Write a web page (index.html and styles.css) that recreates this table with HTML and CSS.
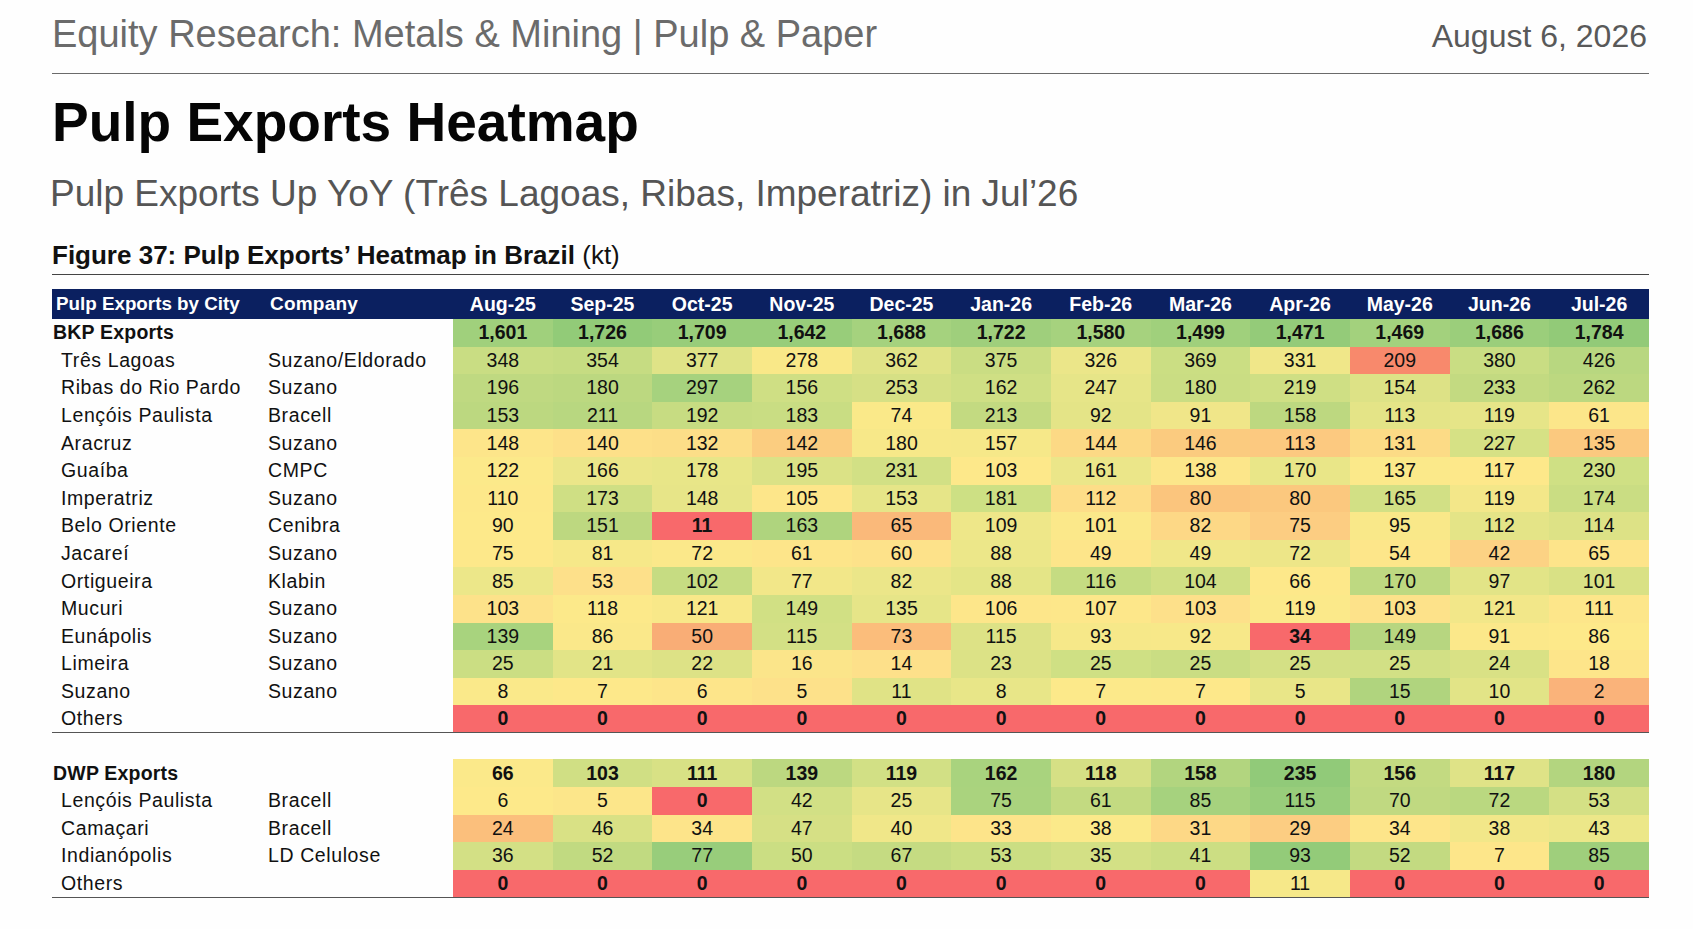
FILE: index.html
```html
<!DOCTYPE html>
<html lang="pt">
<head>
<meta charset="utf-8">
<title>Pulp Exports Heatmap</title>
<link rel="stylesheet" href="styles.css">
</head>
<body>
<div class="page">
  <header class="topbar">
    <div class="topbar-title">Equity Research: Metals &amp; Mining | Pulp &amp; Paper</div>
    <div class="topbar-date">August 6, 2026</div>
  </header>
  <h1 class="title">Pulp Exports Heatmap</h1>
  <h2 class="subtitle">Pulp Exports Up YoY (Três Lagoas, Ribas, Imperatriz) in Jul’26</h2>
  <div class="caption"><b>Figure 37: Pulp Exports’ Heatmap in Brazil</b> (kt)</div>

  <table class="heat">
    <colgroup><col class="c-city"><col class="c-comp"><col span="12" class="c-num"></colgroup>
    <thead>
      <tr><th class="h-city">Pulp Exports by City</th><th class="h-comp">Company</th><th>Aug-25</th><th>Sep-25</th><th>Oct-25</th><th>Nov-25</th><th>Dec-25</th><th>Jan-26</th><th>Feb-26</th><th>Mar-26</th><th>Apr-26</th><th>May-26</th><th>Jun-26</th><th>Jul-26</th></tr>
    </thead>
    <tbody>
      <tr class="total"><td class="city">BKP Exports</td><td class="comp"></td><td style="background:#a0d07c">1,601</td><td style="background:#92cb78">1,726</td><td style="background:#98cd7a">1,709</td><td style="background:#98cd7a">1,642</td><td style="background:#a5d27e">1,688</td><td style="background:#9fcf7c">1,722</td><td style="background:#a6d27e">1,580</td><td style="background:#a0d07c">1,499</td><td style="background:#94cb79">1,471</td><td style="background:#a3d17d">1,469</td><td style="background:#9bce7b">1,686</td><td style="background:#92ca78">1,784</td></tr>
      <tr><td class="city">Três Lagoas</td><td class="comp">Suzano/Eldorado</td><td style="background:#c9dd83">348</td><td style="background:#c6dc82">354</td><td style="background:#dfe387">377</td><td style="background:#f9e888">278</td><td style="background:#e0e387">362</td><td style="background:#cadd83">375</td><td style="background:#ebe689">326</td><td style="background:#cbde83">369</td><td style="background:#f0e789">331</td><td style="background:#f8896c">209</td><td style="background:#c9dd83">380</td><td style="background:#b8d780">426</td></tr>
      <tr><td class="city">Ribas do Rio Pardo</td><td class="comp">Suzano</td><td style="background:#bfd981">196</td><td style="background:#bcd880">180</td><td style="background:#a6d27e">297</td><td style="background:#cfdf84">156</td><td style="background:#d6e085">253</td><td style="background:#cfdf84">162</td><td style="background:#e6e588">247</td><td style="background:#cadd83">180</td><td style="background:#cfdf84">219</td><td style="background:#dde286">154</td><td style="background:#c3da81">233</td><td style="background:#bcd880">262</td></tr>
      <tr><td class="city">Lençóis Paulista</td><td class="comp">Bracell</td><td style="background:#bcd880">153</td><td style="background:#b8d780">211</td><td style="background:#c7dc82">192</td><td style="background:#c9dd83">183</td><td style="background:#fae989">74</td><td style="background:#c3da81">213</td><td style="background:#e4e487">92</td><td style="background:#f0e689">91</td><td style="background:#bdd880">158</td><td style="background:#e4e487">113</td><td style="background:#e6e588">119</td><td style="background:#fce68a">61</td></tr>
      <tr><td class="city">Aracruz</td><td class="comp">Suzano</td><td style="background:#fde58a">148</td><td style="background:#fde089">140</td><td style="background:#fcde88">132</td><td style="background:#fbcd80">142</td><td style="background:#f7e889">180</td><td style="background:#f6e889">157</td><td style="background:#fcd985">144</td><td style="background:#fbcb7f">146</td><td style="background:#fcc980">113</td><td style="background:#fcdb86">131</td><td style="background:#d6e185">227</td><td style="background:#fbc97f">135</td></tr>
      <tr><td class="city">Guaíba</td><td class="comp">CMPC</td><td style="background:#fce98a">122</td><td style="background:#ebe689">166</td><td style="background:#e8e688">178</td><td style="background:#dbe286">195</td><td style="background:#d2e085">231</td><td style="background:#fde88a">103</td><td style="background:#ebe689">161</td><td style="background:#fce68a">138</td><td style="background:#e9e688">170</td><td style="background:#fbe98a">137</td><td style="background:#fde88a">117</td><td style="background:#cfe084">230</td></tr>
      <tr><td class="city">Imperatriz</td><td class="comp">Suzano</td><td style="background:#fde88a">110</td><td style="background:#cfdf84">173</td><td style="background:#e7e588">148</td><td style="background:#fde68a">105</td><td style="background:#e6e588">153</td><td style="background:#cde084">181</td><td style="background:#fddd88">112</td><td style="background:#fbc57d">80</td><td style="background:#fbc87e">80</td><td style="background:#d2e085">165</td><td style="background:#f3e789">119</td><td style="background:#cadd83">174</td></tr>
      <tr><td class="city">Belo Oriente</td><td class="comp">Cenibra</td><td style="background:#fde98a">90</td><td style="background:#bdd880">151</td><td class="red">11</td><td style="background:#afd47e">163</td><td style="background:#fab97a">65</td><td style="background:#eee789">109</td><td style="background:#fbe88a">101</td><td style="background:#fdd886">82</td><td style="background:#fccd82">75</td><td style="background:#f9e889">95</td><td style="background:#e4e487">112</td><td style="background:#dde286">114</td></tr>
      <tr><td class="city">Jacareí</td><td class="comp">Suzano</td><td style="background:#fde88a">75</td><td style="background:#f6e889">81</td><td style="background:#fbe88a">72</td><td style="background:#fde58a">61</td><td style="background:#fde28a">60</td><td style="background:#ece789">88</td><td style="background:#fde58a">49</td><td style="background:#f0e789">49</td><td style="background:#ede688">72</td><td style="background:#fde68a">54</td><td style="background:#fcd284">42</td><td style="background:#fde48a">65</td></tr>
      <tr><td class="city">Ortigueira</td><td class="comp">Klabin</td><td style="background:#ece789">85</td><td style="background:#fde08a">53</td><td style="background:#c6dc82">102</td><td style="background:#f2e789">77</td><td style="background:#ebe689">82</td><td style="background:#e4e587">88</td><td style="background:#c5dc82">116</td><td style="background:#d0df84">104</td><td style="background:#fde88a">66</td><td style="background:#bed981">170</td><td style="background:#e2e487">97</td><td style="background:#d9e185">101</td></tr>
      <tr><td class="city">Mucuri</td><td class="comp">Suzano</td><td style="background:#fde28a">103</td><td style="background:#fce98a">118</td><td style="background:#f8e889">121</td><td style="background:#d1e084">149</td><td style="background:#e6e588">135</td><td style="background:#fde68a">106</td><td style="background:#fde78a">107</td><td style="background:#fde08a">103</td><td style="background:#fbe98a">119</td><td style="background:#fde28a">103</td><td style="background:#f2e789">121</td><td style="background:#fde68a">111</td></tr>
      <tr><td class="city">Eunápolis</td><td class="comp">Suzano</td><td style="background:#a8d37e">139</td><td style="background:#fae88a">86</td><td style="background:#f9ad76">50</td><td style="background:#d3e085">115</td><td style="background:#fbbd7b">73</td><td style="background:#dde286">115</td><td style="background:#f6e889">93</td><td style="background:#f7e889">92</td><td class="red">34</td><td style="background:#b7d680">149</td><td style="background:#fbe88a">91</td><td style="background:#fde98a">86</td></tr>
      <tr><td class="city">Limeira</td><td class="comp">Suzano</td><td style="background:#cbde83">25</td><td style="background:#e2e487">21</td><td style="background:#dde286">22</td><td style="background:#fbe58a">16</td><td style="background:#fde08a">14</td><td style="background:#dce286">23</td><td style="background:#cfe084">25</td><td style="background:#cadd83">25</td><td style="background:#d4e085">25</td><td style="background:#d2e085">25</td><td style="background:#d9e185">24</td><td style="background:#fde58a">18</td></tr>
      <tr><td class="city">Suzano</td><td class="comp">Suzano</td><td style="background:#fae98a">8</td><td style="background:#fde88a">7</td><td style="background:#fde58a">6</td><td style="background:#fde18a">5</td><td style="background:#e0e386">11</td><td style="background:#e8e688">8</td><td style="background:#fce98a">7</td><td style="background:#fde88a">7</td><td style="background:#e9e688">5</td><td style="background:#b0d47e">15</td><td style="background:#e2e487">10</td><td style="background:#fab37a">2</td></tr>
      <tr class="last"><td class="city">Others</td><td class="comp"></td><td class="red">0</td><td class="red">0</td><td class="red">0</td><td class="red">0</td><td class="red">0</td><td class="red">0</td><td class="red">0</td><td class="red">0</td><td class="red">0</td><td class="red">0</td><td class="red">0</td><td class="red">0</td></tr>
    </tbody>
  </table>

  <table class="heat heat-dwp">
    <colgroup><col class="c-city"><col class="c-comp"><col span="12" class="c-num"></colgroup>
    <tbody>
      <tr class="total"><td class="city">DWP Exports</td><td class="comp"></td><td style="background:#fbe98a">66</td><td style="background:#d0df84">103</td><td style="background:#d8e185">111</td><td style="background:#bcd880">139</td><td style="background:#d2e085">119</td><td style="background:#a9d37e">162</td><td style="background:#d6e085">118</td><td style="background:#b2d57f">158</td><td style="background:#91ca79">235</td><td style="background:#c3da81">156</td><td style="background:#dfe387">117</td><td style="background:#b3d57f">180</td></tr>
      <tr><td class="city">Lençóis Paulista</td><td class="comp">Bracell</td><td style="background:#fde98a">6</td><td style="background:#fce68a">5</td><td class="red">0</td><td style="background:#d2e085">42</td><td style="background:#e7e588">25</td><td style="background:#aad37e">75</td><td style="background:#c3da81">61</td><td style="background:#a6d27e">85</td><td style="background:#98cd7b">115</td><td style="background:#c0d981">70</td><td style="background:#bad880">72</td><td style="background:#d4e085">53</td></tr>
      <tr><td class="city">Camaçari</td><td class="comp">Bracell</td><td style="background:#fbbf7c">24</td><td style="background:#d9e185">46</td><td style="background:#fde48a">34</td><td style="background:#d6e085">47</td><td style="background:#f0e789">40</td><td style="background:#fde48a">33</td><td style="background:#fbe98a">38</td><td style="background:#fdd886">31</td><td style="background:#fccd82">29</td><td style="background:#fde58a">34</td><td style="background:#f2e789">38</td><td style="background:#ece789">43</td></tr>
      <tr><td class="city">Indianópolis</td><td class="comp">LD Celulose</td><td style="background:#d3e085">36</td><td style="background:#c1da81">52</td><td style="background:#98cd7b">77</td><td style="background:#cbde83">50</td><td style="background:#c5db82">67</td><td style="background:#cbde83">53</td><td style="background:#d3e085">35</td><td style="background:#ccde83">41</td><td style="background:#93cb79">93</td><td style="background:#c3da81">52</td><td style="background:#fde68a">7</td><td style="background:#9fcf7c">85</td></tr>
      <tr class="last"><td class="city">Others</td><td class="comp"></td><td class="red">0</td><td class="red">0</td><td class="red">0</td><td class="red">0</td><td class="red">0</td><td class="red">0</td><td class="red">0</td><td class="red">0</td><td style="background:#f6e889">11</td><td class="red">0</td><td class="red">0</td><td class="red">0</td></tr>
    </tbody>
  </table>
</div>
</body>
</html>
```

FILE: styles.css
```css
* { box-sizing: border-box; }

html, body {
  margin: 0;
  padding: 0;
  background: #fefefe;
}

body {
  font-family: "Liberation Sans", Arial, sans-serif;
  color: #111;
}

.page {
  width: 1693px;
  padding: 12px 44px 0 52px;
}

.topbar {
  display: flex;
  justify-content: space-between;
  align-items: baseline;
  border-bottom: 1.5px solid #6a6a6a;
  padding-bottom: 15px;
}

.topbar-title {
  font-size: 38px;
  line-height: 44px;
  color: #6b6b6b;
}

.topbar-date {
  font-size: 32px;
  line-height: 44px;
  color: #595959;
  padding-right: 2px;
}

.title {
  margin: 17px 0 0;
  font-size: 55px;
  line-height: 63px;
  font-weight: bold;
  color: #050505;
}

.subtitle {
  margin: 18px 0 0 -2px;
  font-size: 37px;
  line-height: 43px;
  font-weight: normal;
  color: #555;
}

.caption {
  margin-top: 25px;
  font-size: 26px;
  line-height: 30px;
  color: #111;
  padding-bottom: 4px;
  border-bottom: 1.5px solid #444;
}

.caption b {
  font-weight: bold;
}

.heat {
  width: 1597px;
  table-layout: fixed;
  border-collapse: collapse;
  border-spacing: 0;
  margin-top: 14px;
  font-size: 19.5px;
}

.heat-dwp {
  margin-top: 26px;
}

.c-city { width: 216px; }
.c-comp { width: 185px; }
.c-num  { width: 99.66px; }

.heat th {
  background: #0b2060;
  color: #fff;
  font-weight: bold;
  height: 30px;
  padding: 0;
  text-align: center;
  white-space: nowrap;
}

.heat th.h-city {
  text-align: left;
  padding-left: 4px;
  font-size: 18.8px;
  letter-spacing: 0;
}

.heat th.h-comp {
  text-align: left;
  padding-left: 2px;
  font-size: 19px;
  letter-spacing: 0.2px;
}

.heat td {
  height: 27.6px;
  padding: 0;
  text-align: center;
  white-space: nowrap;
  color: #111;
}

.heat td.city {
  text-align: left;
  padding-left: 9px;
  letter-spacing: 0.6px;
}

.heat td.comp {
  text-align: left;
  padding-left: 0;
  letter-spacing: 0.6px;
}

.heat tr.total td {
  font-weight: bold;
}

.heat tr.total td.city {
  padding-left: 1px;
  letter-spacing: 0.2px;
}

.heat td.red {
  background: #f8696b;
  font-weight: bold;
}

.heat tr.last td {
  border-bottom: 1.5px solid #555;
}
```
